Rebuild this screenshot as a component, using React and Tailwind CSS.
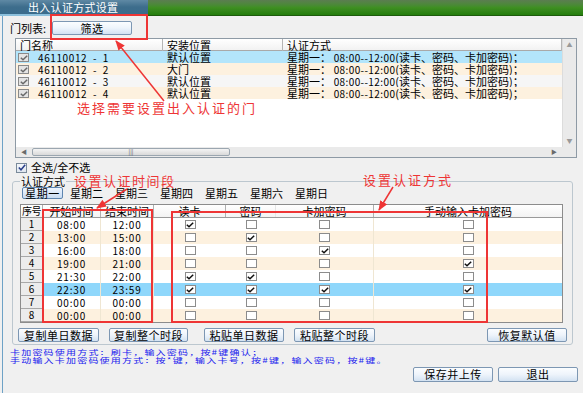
import React from 'react';

// 门列表数据
const doors = [
  { id: 1, place: '默认位置', bg: 'bg-[#b3e5fb]' },
  { id: 2, place: '大门', bg: 'bg-[#fdf1df]' },
  { id: 3, place: '默认位置', bg: 'bg-[#f6f6f6]' },
  { id: 4, place: '默认位置', bg: 'bg-[#fdf1df]' },
];

// 时间段：读卡 / 密码 / 卡加密码 / 手动输入卡加密码
const periods = [
  { start: '08:00', end: '12:00', checks: [1, 0, 0, 0], bg: 'bg-white' },
  { start: '13:00', end: '15:00', checks: [0, 1, 0, 0], bg: 'bg-[#fdf1df]' },
  { start: '16:00', end: '18:00', checks: [0, 0, 1, 0], bg: 'bg-white' },
  { start: '19:00', end: '21:00', checks: [0, 0, 0, 1], bg: 'bg-[#fdf1df]' },
  { start: '21:30', end: '22:00', checks: [1, 1, 0, 0], bg: 'bg-white' },
  { start: '22:30', end: '23:59', checks: [1, 1, 1, 1], bg: 'bg-[#8fd7fb]' },
  { start: '00:00', end: '00:00', checks: [0, 0, 0, 0], bg: 'bg-white' },
  { start: '00:00', end: '00:00', checks: [0, 0, 0, 0], bg: 'bg-[#fdf1df]' },
];

const days = ['星期二', '星期三', '星期四', '星期五', '星期六', '星期日'];

function Check({ on, muted }) {
  return (
    <span
      className={`inline-flex w-[11px] h-[9px] items-center justify-center border ${
        muted ? 'border-[#8a8a8a] bg-[#e4e4e4]' : 'border-[#8c8c8c] bg-white'
      }`}
    >
      {on ? (
        <svg width="8" height="6" viewBox="0 0 8 6">
          <path d="M0.8 2.8 L3 4.8 L7.2 0.8" stroke={muted ? '#6a6a6a' : '#111'} strokeWidth="1.5" fill="none" />
        </svg>
      ) : null}
    </span>
  );
}

function Btn({ children, className = '' }) {
  return (
    <button
      className={`flex items-center justify-center border border-[#7d97b3] rounded-[2px] bg-gradient-to-b from-[#fbfdff] via-[#eef4fb] to-[#d3e2f2] text-[11px] leading-[11px] text-black tracking-[0.5px] ${className}`}
    >
      {children}
    </button>
  );
}

export default function App() {
  return (
    <div className="relative w-[583px] h-[393px] overflow-hidden bg-[#f0f0f0] font-['Noto_Sans_CJK_SC',sans-serif] text-[11px] text-black flex flex-col">
      {/* 标题栏 */}
      <div className="h-[16px] flex shrink-0">
        <div className="w-[148px] bg-gradient-to-b from-[#5f89a4] via-[#3d6d8c] to-[#3a6c8c] border-b-2 border-[#8cc0dc] text-white pl-[28px] leading-[14px] tracking-[0.3px]">
          出入认证方式设置
        </div>
        <div className="flex-1 bg-gradient-to-b from-[#5b7d50] via-[#3f8f22] to-[#237d0c] border-b border-[#1d5a0c]" />
      </div>

      <div className="flex-1 ml-[2px] border-l border-[#6ea2c6] flex flex-col">
        {/* 门列表 */}
        <div className="mt-[5px] h-[14px] flex items-center pl-[7px]">
          <span className="leading-[12px]">门列表:</span>
          <Btn className="ml-[6px] w-[80px] h-[14px]">筛选</Btn>
        </div>

        <div className="mt-[3px] ml-[12px] w-[562px] h-[120px] border border-[#8e9aa5] bg-white flex flex-col">
          <div className="h-[108px] flex">
            <div className="flex-1 flex flex-col">
              <div className="h-[12px] grid grid-cols-[147px_120px_279px] bg-gradient-to-b from-white to-[#f2f2f2] border-b border-[#a9a9a9]">
                <div className="border-r border-[#b5b5b5] pl-[4px] leading-[12px]">门名称</div>
                <div className="border-r border-[#b5b5b5] pl-[4px] leading-[12px]">安装位置</div>
                <div className="border-r border-[#b5b5b5] pl-[4px] leading-[12px]">认证方式</div>
              </div>
              {doors.map((d) => (
                <div key={d.id} className={`h-[12px] grid grid-cols-[147px_120px_279px] ${d.bg}`}>
                  <div className="flex items-center pl-[2px]">
                    <Check on muted />
                    <span className="ml-[9px] text-[10px] leading-[12px] tracking-[0.6px] whitespace-pre">
                      {`46110012  -  ${d.id}`}
                    </span>
                  </div>
                  <div className="pl-[4px] leading-[12px]">{d.place}</div>
                  <div className="pl-[4px] leading-[12px] whitespace-nowrap">
                    星期一：<span className="text-[10px] tracking-[0.4px]"> 08:00--12:00</span>(读卡、密码、卡加密码)；
                  </div>
                </div>
              ))}
            </div>
            <div className="w-[14px] bg-[#eaeaea] border-l border-[#dcdcdc] flex flex-col items-center justify-between py-[3px] text-[6px] text-[#9a9a9a] leading-[6px]">
              <span>▲</span>
              <span>▼</span>
            </div>
          </div>
          <div className="h-[10px] flex">
            <div className="flex-1 bg-[#eaeaea] flex items-center">
              <span className="w-[16px] text-center text-[6px] text-[#6a6a6a] leading-[6px]">◀</span>
              <div className="w-[198px] h-[8px] border border-[#9ba6b0] rounded-[2px] bg-gradient-to-b from-[#f4f4f4] to-[#d9d9d9] flex items-center justify-center text-[6px] leading-[6px] text-[#555]">
                |||
              </div>
              <span className="ml-auto w-[16px] text-center text-[6px] text-[#6a6a6a] leading-[6px]">▶</span>
            </div>
            <div className="w-[14px] bg-[#eaeaea]" />
          </div>
        </div>

        {/* 全选 */}
        <div className="mt-[4px] h-[11px] pl-[13px] flex items-center">
          <span className="inline-flex w-[11px] h-[10px] items-center justify-center border border-[#7a8a9a] bg-gradient-to-b from-[#f4f6fa] to-[#dfe6ef]">
            <svg width="8" height="7" viewBox="0 0 8 7">
              <path d="M0.8 3.4 L3 5.8 L7.2 0.8" stroke="#2a3f8a" strokeWidth="1.5" fill="none" />
            </svg>
          </span>
          <span className="ml-[4px] leading-[11px]">全选/全不选</span>
        </div>

        {/* 认证方式 */}
        <fieldset className="mt-[3px] ml-[9px] w-[561px] border border-[#bcc7cf] rounded-[3px] pl-[5px] pr-[5px] pb-[2px]">
          <legend className="ml-[2px] px-[1px] leading-[11px] h-[11px]">认证方式</legend>
          <div className="h-[12px] flex items-center">
            <button className="ml-[4px] w-[41px] h-[12px] border border-[#5f86b0] rounded-[2px] bg-gradient-to-b from-[#eef5ff] to-[#c9dcf2] leading-[10px] tracking-[0.5px]">
              星期一
            </button>
            <div className="ml-[7px] flex">
              {days.map((d) => (
                <span key={d} className="w-[45px] leading-[12px]">
                  {d}
                </span>
              ))}
            </div>
          </div>

          <div className="mt-[5px] ml-[2px] w-[543px] border border-[#8c8c8c] bg-white">
            <div className="h-[13px] grid grid-cols-[22px_58px_53px_72px_50px_98px_188px] bg-gradient-to-b from-white to-[#f3f3f3] border-b border-[#9a9a9a] text-center leading-[12px]">
              <div className="border-r border-[#b0b0b0] text-[10px] tracking-[-0.5px] whitespace-nowrap">序号</div>
              <div className="border-r border-[#b0b0b0]">开始时间</div>
              <div className="border-r border-[#b0b0b0]">结束时间</div>
              <div className="border-r border-[#b0b0b0]">读卡</div>
              <div className="border-r border-[#e6e6e6]">密码</div>
              <div className="border-r border-[#b0b0b0]">卡加密码</div>
              <div>手动输入卡加密码</div>
            </div>
            {periods.map((p, i) => (
              <div key={i} className={`h-[13px] grid grid-cols-[22px_58px_53px_72px_50px_98px_188px] ${p.bg}`}>
                <div className="bg-[#ececec] border-r border-b border-[#a8a8a8] text-center text-[10px] leading-[12px]">
                  {i + 1}
                </div>
                <div className="border-r border-[#efe6d2] text-center text-[10px] leading-[13px] tracking-[0.8px]">{p.start}</div>
                <div className="border-r border-[#efe6d2] text-center text-[10px] leading-[13px] tracking-[0.8px]">{p.end}</div>
                {p.checks.map((c, j) => (
                  <div
                    key={j}
                    className={`flex items-center justify-center ${j === 2 ? 'border-r border-[#efe6d2]' : ''}`}
                  >
                    <Check on={c === 1} />
                  </div>
                ))}
              </div>
            ))}
          </div>

          <div className="mt-[5px] h-[14px] flex">
            <Btn className="w-[81px] h-[14px]">复制单日数据</Btn>
            <Btn className="ml-[10px] w-[79px] h-[14px]">复制整个时段</Btn>
            <Btn className="ml-[16px] w-[80px] h-[14px]">粘贴单日数据</Btn>
            <Btn className="ml-[10px] w-[81px] h-[14px]">粘贴整个时段</Btn>
            <Btn className="ml-auto w-[80px] h-[14px]">恢复默认值</Btn>
          </div>
        </fieldset>

        {/* 说明 */}
        <div className="mt-[3px] h-[16px] pl-[7px] text-[#2222ee] text-[10px] leading-[11px] tracking-[1.2px]">
          <div className="origin-top-left scale-y-[0.72]">
            <div>卡加密码使用方式：刷卡，输入密码，按#键确认；</div>
            <div>手动输入卡加密码使用方式：按*键，输入卡号，按#键，输入密码，按#键。</div>
          </div>
        </div>

        <div className="mt-[3px] h-[15px] flex justify-end pr-[5px] gap-[5px]">
          <Btn className="w-[80px] h-[15px]">保存并上传</Btn>
          <Btn className="w-[80px] h-[15px]">退出</Btn>
        </div>
      </div>

      {/* 标注 */}
      <div className="absolute left-[50px] top-[14px] w-[98px] h-[26px] border-2 border-[#ee3535] pointer-events-none" />
      <div className="absolute left-[42px] top-[209px] w-[111px] h-[114px] border-2 border-[#ee3535] pointer-events-none" />
      <div className="absolute left-[171px] top-[211px] w-[317px] h-[112px] border-2 border-[#ee3535] pointer-events-none" />
      <div className="absolute left-[77px] top-[101px] text-[#ee3535] text-[13px] leading-[14px] tracking-[2px]">
        选择需要设置出入认证的门
      </div>
      <div className="absolute left-[74px] top-[174px] text-[#ee3535] text-[13px] leading-[14px] tracking-[1.5px]">
        设置认证时间段
      </div>
      <div className="absolute left-[363px] top-[173px] text-[#ee3535] text-[13px] leading-[14px] tracking-[2px]">
        设置认证方式
      </div>
      <svg className="absolute inset-0 pointer-events-none" width="583" height="393">
        <defs>
          <marker id="ah" markerUnits="userSpaceOnUse" markerWidth="10" markerHeight="8" refX="9" refY="4" orient="auto">
            <path d="M0,0 L10,4 L0,8 z" fill="#ee3535" />
          </marker>
        </defs>
        <line x1="164" y1="101" x2="116" y2="41" stroke="#ee3535" strokeWidth="1.5" markerEnd="url(#ah)" />
        <line x1="127" y1="189" x2="97" y2="208" stroke="#ee3535" strokeWidth="1.5" markerEnd="url(#ah)" />
        <line x1="393" y1="187" x2="379" y2="210" stroke="#ee3535" strokeWidth="1.5" markerEnd="url(#ah)" />
      </svg>
    </div>
  );
}
